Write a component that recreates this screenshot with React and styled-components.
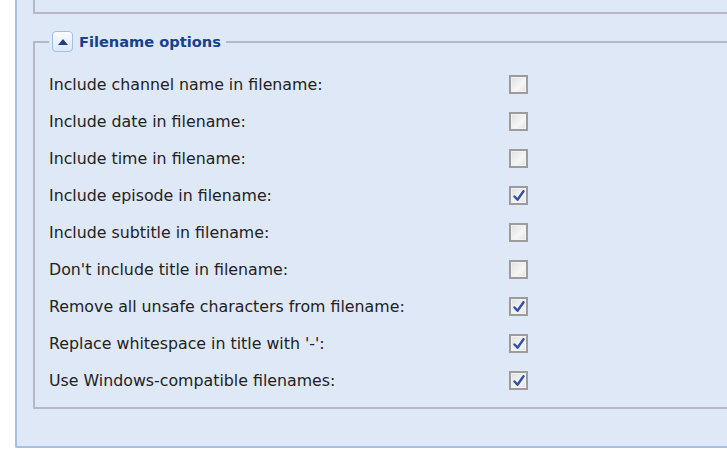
import React from "react";
import styled, { createGlobalStyle } from "styled-components";

const Global = createGlobalStyle`
  html, body { margin: 0; padding: 0; background: #fff; overflow: hidden; }
  body { width: 727px; height: 451px; }
`;

const Panel = styled.div`
  margin-left: 15px;
  width: 760px;
  height: 448px;
  box-sizing: border-box;
  background: #dfe8f6;
  border-left: 2px solid #a3c0e8;
  border-bottom: 2px solid #a3c0e8;
  border-bottom-left-radius: 2px;
  padding: 0 0 0 16px;
  font-family: "DejaVu Sans", sans-serif;
`;

const TopFieldset = styled.div`
  height: 12px;
  border-left: 2px solid #b5b8c8;
  border-bottom: 2px solid #b5b8c8;
`;

const Fieldset = styled.fieldset`
  margin: 17px 0 0 0;
  padding: 14px 14px 8px 14px;
  border: 2px solid #b5b8c8;
  border-right: none;
`;

const Legend = styled.legend`
  display: flex;
  align-items: center;
  gap: 6px;
  padding: 0 5px 0 3px;
  margin-left: 0;
`;

const ToggleButton = styled.span`
  width: 21px;
  height: 21px;
  box-sizing: border-box;
  border: 1px solid #9fc0ea;
  border-radius: 4px;
  background: linear-gradient(#fbfdff, #dbe8fa);
  display: flex;
  align-items: center;
  justify-content: center;
`;

const LegendText = styled.span`
  font-weight: bold;
  font-size: 14.6px;
  color: #15428b;
`;

const Row = styled.div`
  display: flex;
  align-items: center;
  height: 37px;
`;

const Label = styled.span`
  width: 460px;
  font-size: 15.8px;
  color: #222;
`;

const Box = styled.span`
  width: 19px;
  height: 19px;
  box-sizing: border-box;
  border: 2px solid #9c9c9c;
  background: linear-gradient(135deg, #dedede, #f6f6f6 60%, #e0e0e0);
  box-shadow: inset 0 0 0 1px #f2f2f2;
  display: flex;
  align-items: center;
  justify-content: center;
`;

const rows = [
  ["Include channel name in filename:", false],
  ["Include date in filename:", false],
  ["Include time in filename:", false],
  ["Include episode in filename:", true],
  ["Include subtitle in filename:", false],
  ["Don't include title in filename:", false],
  ["Remove all unsafe characters from filename:", true],
  ["Replace whitespace in title with '-':", true],
  ["Use Windows-compatible filenames:", true],
];

const Check = () => (
  <svg width="12" height="12" viewBox="0 0 12 12">
    <path d="M1.5 6.5 L4.5 9.8 L10.5 1.2" fill="none" stroke="#3350aa" strokeWidth="2.4" strokeLinecap="round" strokeLinejoin="round" />
  </svg>
);

export default function App() {
  return (
    <>
      <Global />
      <Panel>
        <TopFieldset />
        <Fieldset>
          <Legend>
            <ToggleButton>
              <svg width="10" height="6" viewBox="0 0 10 6">
                <path d="M0 6 L5 0 L10 6 Z" fill="#1e3f8f" />
              </svg>
            </ToggleButton>
            <LegendText>Filename options</LegendText>
          </Legend>
          {rows.map(([label, checked]) => (
            <Row key={label}>
              <Label>{label}</Label>
              <Box>{checked && <Check />}</Box>
            </Row>
          ))}
        </Fieldset>
      </Panel>
    </>
  );
}
